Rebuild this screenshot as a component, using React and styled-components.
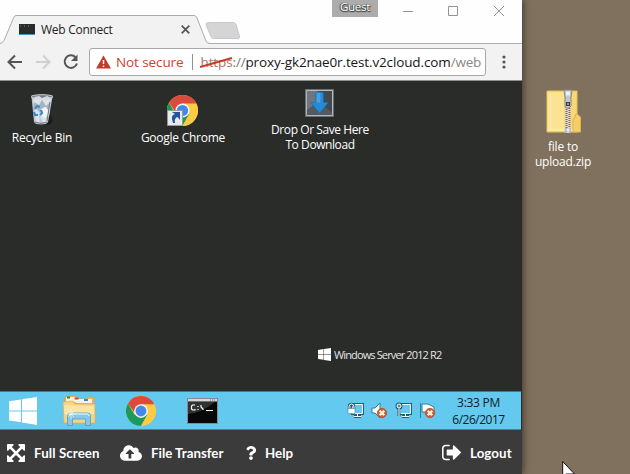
import React from "react";
import styled, { createGlobalStyle } from "styled-components";
import { FaQuestion, FaCloudUploadAlt } from "react-icons/fa";

const Global = createGlobalStyle`
  * { box-sizing: border-box; }
  body { margin: 0; overflow: hidden; }
`;
const ui = `"Open Sans", "Noto Sans", sans-serif`;

const Screen = styled.div`
  display: grid; grid-template-columns: 522px 108px; width: 630px; height: 474px;
  overflow: hidden; font-family: ${ui}; background: #7f715e;
`;
const Browser = styled.main`
  display: grid; grid-template-rows: 44px 37px 310px 39px 44px; min-width: 0;
  background: #2a2c2a; box-shadow: 1px 0 7px rgba(30, 22, 15, 0.65); z-index: 1;
`;
const Text = styled.span`
  display: block; white-space: pre; flex: none; text-align: center;
  font-size: ${p => p.$size || 12}px; line-height: ${p => p.$line || 15}px;
  letter-spacing: ${p => p.$track || 0}px; color: ${p => p.$color || "#fff"};
`;

const TabStrip = styled.header`
  display: flex; align-items: flex-start; background: #fefefe;
  border-bottom: 1px solid #adb0b3; height: 44px;
`;
const Tab = styled.div`
  display: flex; align-items: center; position: relative; width: 205px; height: 29px;
  margin-top: 15px; padding-left: 19px; flex: none;
`;
const TabShape = styled.svg`position: absolute; left: 0; top: 0; overflow: visible;`;
const TabContent = styled.div`
  display: flex; align-items: center; position: relative; width: 172px;
`;
const TabTitle = styled(Text)`margin-left: 6px; width: 140px; text-align: left;`;
const NewTab = styled.svg`margin-top: 22px; flex: none;`;
const Guest = styled.div`
  width: 46px; height: 17px; margin-left: 86px; background: #acacac; display: flex;
  justify-content: center; text-shadow: 0 0 1px #444, 1px 1px 1px #555, -1px 0 1px #555, 0 1px 1px #444;
`;
const Controls = styled.svg`margin: 5px 0 0 25px; flex: none;`;

const Toolbar = styled.nav`
  display: flex; align-items: center; background: #f2f2f2; padding: 0 0 0 7px;
  border-bottom: 1px solid #8f8f8f;
`;
const NavIcons = styled.svg`flex: none;`;
const Address = styled.div`
  display: flex; align-items: center; width: 397px; height: 28px; margin-left: 11px;
  border: 1px solid #a8a8a8; border-radius: 3px; background: #fff; padding-left: 6px; overflow: hidden;
  svg { flex: none; }
`;
const Security = styled.div`display: flex; align-items: center; gap: 5px;`;
const Rule = styled.i`width: 1px; height: 16px; background: #909090; margin: 0 7px 0 9px; flex: none;`;
const Scheme = styled.div`position: relative; flex: none; width: 45px; display: flex;`;
const Strike = styled.svg`position: absolute; left: 0; top: 2px;`;
const Menu = styled.svg`margin-left: 15px; flex: none;`;

const Remote = styled.section`
  display: flex; flex-direction: column; justify-content: space-between; background: #2a2c2a;
`;
const Icons = styled.div`display: grid; grid-template-columns: 84px 198px 76px; padding-top: 7px;`;
const Shortcut = styled.div`display: flex; flex-direction: column; align-items: center;`;
const Picture = styled.div`
  height: ${p => p.$h}px; display: flex; align-items: flex-end;
  padding: 0 ${p => p.$left || 0}px ${p => p.$gap}px ${p => p.$right || 0}px;
  svg { display: block; }
`;
const Brand = styled.div`display: flex; align-items: center; margin: 0 0 29px 318px; gap: 3px; height: 16px;`;

const Taskbar = styled.div`
  display: flex; align-items: center; justify-content: space-between; background: #63c9ee;
  border-top: 1px solid #4f7584; border-bottom: 1px solid #4d8094; margin-right: 1px;
`;
const Launchers = styled.div`display: flex; align-items: center; padding-left: 9px;`;
const Launcher = styled.div`width: ${p => p.$w}px; svg { display: block; }`;
const Tray = styled.div`display: flex; align-items: center; padding-right: 16px;`;
const TrayIcons = styled.svg`margin-right: 16px;`;
const Clock = styled.div`display: flex; flex-direction: column; align-items: center; width: 53px;`;

const Footer = styled.footer`
  display: flex; align-items: center; background: #3b3b3b; padding: 1px 9px 0 7px;
`;
const Action = styled.div`
  display: flex; align-items: center; color: #fff; gap: ${p => p.$gap}px; width: ${p => p.$w}px;
  margin-left: ${p => (p.$end ? "auto" : 0)}; white-space: nowrap;
  font: 700 13.3px/18px Lato, sans-serif; letter-spacing: ${p => p.$track || 0}px;
  svg { flex: none; }
`;
const Desktop = styled.aside`
  display: flex; flex-direction: column; align-items: center; padding: 89px 26px 0 0;
  background: #7f715e; overflow: hidden; height: 474px;
`;
const Cursor = styled.svg`margin: auto 0 0 40px; flex: none; align-self: flex-start;`;

const ChromeLogo = ({ size }) => (
  <svg width={size} height={size} viewBox="0 0 48 48">
    <circle cx="24" cy="24" r="24" fill="#fbcb43" />
    <path d="M3.2 12A24 24 0 0 0 24 48L34.4 30 24 24 13.6 30Z" fill="#1d9a5b" />
    <path d="M24 13H45.3A24 24 0 0 1 24 48L34 30Z" fill="#fbcb43" />
    <path d="M3.2 12A24 24 0 0 1 45.3 13H24L13 26Z" fill="#db4a3d" />
    <circle cx="24" cy="24" r="11" fill="#f5f6f5" />
    <circle cx="24" cy="24" r="8.7" fill="#4389ec" />
  </svg>
);
const WinLogo = ({ size, fill = "#fff" }) => (
  <svg width={size} height={size} viewBox="0 0 28 28">
    <path d="M0 4.2L12 2.4V13.4H0ZM13 2.2L28 0V13.4H13ZM0 14.4H12V25.3L0 23.6ZM13 14.4H28V28L13 25.6Z" fill={fill} />
  </svg>
);
const RecycleBin = () => (
  <svg width="26" height="32" viewBox="0 0 26 32">
    <path d="M19 10L24 28L20 31H9Z" fill="#1b1d1b" />
    <path d="M2.500 3L5 28Q6 30.500 12 30.500T19 28L23.500 3Z" fill="#bcc5cf" />
    <path d="M4 5L7 28L11 30L10 20L14 29L18 28L16 20L20 23L22 5Z" fill="#dce2e8" />
    <path d="M5 8l5 3 3-5 4 6 4-4-1 8-5-3-4 6-4-5-3 3Z" fill="#a7b3c2" />
    <path d="M12 15l5-2 2 4-2 7-4-2Z" fill="#f2f4f5" />
    <ellipse cx="13" cy="2.700" rx="11" ry="2" fill="#737b82" stroke="#cdd3d8" />
    <path d="M5 3l5-1 3 2 5-2 4 2-3 2H7Z" fill="#d9dcdf" />
    <path d="M6 15l2-3 3 1M12 16l1 3-2 2M9 21H6l-1-3" stroke="#2d8fd5" strokeWidth="2.200" fill="none" />
    <path d="M21 8l-3 19M6 28q6 3 12 0" stroke="#6e7984" fill="none" />
  </svg>
);
const DropIcon = () => (
  <svg width="29" height="28" viewBox="0 0 30 29">
    <path d="M0 0H30V29H0Z" fill="#686c70" />
    <path d="M1.5 1.5H28.5V27.5H1.5Z" fill="#43484f" stroke="#bcc2c5" />
    <path d="M2 2H13V15L2 22Z" fill="#6e767e" />
    <path d="M2 22L8 17L12 21L20 18L28 24V27H2Z" fill="#545a62" />
    <path d="M11 4Q15 2 19 4V14H24L15 25L6 14H11Z" fill="#258bd8" stroke="#1b6db0" strokeWidth=".7" />
    <path d="M12 4h4v10h-4Z" fill="#45a1e2" />
  </svg>
);
const ZipFolder = () => (
  <svg width="36" height="45" viewBox="0 0 36 45">
    <path d="M1 2H31V43H1Z" fill="#f8d775" stroke="#eac35b" />
    <path d="M1.5 3H18V42H1.5Z" fill="#fce394" />
    <path d="M4.500 5V40M1.500 41H30" stroke="#fff0b6" />
    <path d="M27 43V31L29 28V26L31 25 34.5 28V43Z" fill="#f6ce68" stroke="#deb24d" />
    <path d="M19 15H25V44H19Z" fill="#ddd8c9" />
    <path d="M20.500 16V44" stroke="#706a62" strokeWidth="2" strokeDasharray="1 1" />
    <path d="M23.500 17V44" stroke="#9b6054" strokeWidth="2" strokeDasharray="1 1" />
    <path d="M18 1H26L25 8V17L23 19H20L19 17V8Z" fill="#c3c6c9" stroke="#858789" />
    <path d="M20 2.500h4v4h-4Z" fill="#eceeef" />
    <path d="M20 13h4v4h-4Z" fill="#3c3f42" /><path d="M21 15h2" stroke="#ddd" />
    <path d="M19 39h6v5h-6Z" fill="#b4b9c5" /><path d="M20 41h4M22 39v5" stroke="#f4f4f4" />
  </svg>
);
const Explorer = () => (
  <svg width="34" height="32" viewBox="0 0 34 32">
    <path d="M3 3L5 1H13L15 4H24L26 2H32V25H3Z" fill="#e6b75c" stroke="#d3a04c" strokeWidth=".7" />
    <path d="M4 2h10v5H4ZM14 4h16v4H14Z" fill="#f5f3e5" />
    <path d="M5 2.500h3" stroke="#168a55" strokeWidth="2" /><path d="M12.500 3.500h4" stroke="#cf4938" strokeWidth="2" />
    <path d="M22 5h4" stroke="#4084bf" strokeWidth="2" />
    <path d="M1 7L11 6 13 9H33V28H2Z" fill="#f6d481" stroke="#dfb05a" strokeWidth=".7" />
    <path d="M2 10L32 11V19H2Z" fill="#fae4a4" />
    <path d="M5.500 30.500V21Q5.500 18 8 18H26Q28.500 18 28.500 21V30.500H23.500V24H10.500V30.500Z" fill="#86c8e9" stroke="#4b9dcb" strokeWidth=".8" />
    <path d="M7 20Q7 19 9 19H25Q27 19 27 21" fill="none" stroke="#cdebf7" strokeWidth="1.5" />
    <path d="M9 14v10M4 19h10M6 16l6 6M12 16l-6 6" stroke="#fff" strokeWidth=".6" />
  </svg>
);
const Terminal = () => (
  <svg width="31" height="26" viewBox="0 0 31 26">
    <path d="M.5.5H30.500V25.500H.5Z" fill="#080808" stroke="#858b91" />
    <path d="M1 4V16Q14 15 28 4Z" fill="#30332f" />
    <path d="M1 1H30V3.500H1Z" fill="#d4d8de" /><path d="M23 2h6" stroke="#55637b" strokeDasharray="1 1" />
    <path d="M8 7H5.500L4.500 8V11L5.500 12H8V11M11 8v1M11 11v1M14 7v2l2 2v1M19 12.500h7" stroke="#fff" fill="none" strokeWidth="1.200" />
  </svg>
);
const ErrorBadge = ({ x, y }) => (
  <g transform={`translate(${x} ${y})`}>
    <circle cx="5" cy="5" r="4.700" fill="#dc582f" stroke="#b94020" strokeWidth=".6" />
    <path d="M2.700 2.700L7.300 7.300M7.300 2.700L2.700 7.300" stroke="#fff7d8" strokeWidth="2.200" />
  </g>
);
const Monitor = () => (
  <>
    <path d="M4.500 1.500H14.500V10.500H4.500Z" fill="none" stroke="#245d73" strokeWidth="3" />
    <path d="M9.500 11v2M6 13.500H13" stroke="#245d73" strokeWidth="3" />
    <path d="M4.500 1.500H14.500V10.500H4.500Z" fill="#63c9ee" stroke="#f5fcff" />
    <path d="M9.500 11v3M6 13.500H13" stroke="#fff" />
  </>
);

export default function App() {
  return (
    <>
      <Global />
      <Screen>
        <Browser>
          <TabStrip>
            <Tab>
              <TabShape width="210" height="30">
                <path d="M0 28.500Q3 28 4 25.500L13.500 3Q14.500 .5 16 .5H194Q196 .5 197 3L206 26Q207 28.500 210 28.500V30H0Z" fill="#f2f2f2" />
                <path d="M0 28.500Q3 28 4 25.500L13.500 3Q14.500 .5 16 .5H194Q196 .5 197 3L206 26Q207 28.500 210 28.500" fill="none" stroke="#a8abae" />
              </TabShape>
              <TabContent>
                <svg width="16" height="12"><path d="M0 0H16V11H0Z" fill="#292c2b" /><path d="M0 10.500H16" stroke="#349dc5" /><path d="M1 2h1M5 2h1M9 2h1" stroke="#6c8994" /></svg>
                <TabTitle $color="#222" $track={-0.27}>Web Connect</TabTitle>
                <svg width="9" height="9"><path d="M.7.7L8.300 8.300M8.300.7L.7 8.300" stroke="#555" strokeWidth="1.700" /></svg>
              </TabContent>
            </Tab>
            <NewTab width="41" height="18">
              <path d="M3.500.5H28Q30 .5 31 2.500L34.500 14Q35 16.500 33 16.500H9Q7 16.500 6 14.500L1 3Q.5.5 3.500.5Z" fill="#d5d5d5" stroke="#c5c9cf" />
            </NewTab>
            <Guest><Text $size={11.5} $line={14} $track={-0.3}>Guest</Text></Guest>
            <Controls width="110" height="14" fill="none" stroke="#949494">
              <path d="M0 6.500H10M46 1.500H54.500V10.500H45.500V1.500ZM91 1L101 11M101 1L91 11" />
            </Controls>
          </TabStrip>
          <Toolbar>
            <NavIcons width="71" height="20" fill="none" strokeWidth="2">
              <path d="M15 10H2M8 3.500L1.500 10L8 16.500" stroke="#555" />
              <path d="M29 10H42M36 3.500L42.500 10L36 16.500" stroke="#cfcfcf" />
              <path d="M68.500 5.200A6.300 6.300 0 1 0 70 11.500" stroke="#555" /><path d="M70.500 2.500V9H64Z" fill="#555" />
            </NavIcons>
            <Address>
              <Security>
                <svg width="15" height="14"><path d="M7.500.5L15 13.500H0Z" fill="#c5392b" /><path d="M7.500 5v4M7.500 10.500v1.500" stroke="#fff" strokeWidth="1.500" /></svg>
                <Text $size={13.5} $line={20} $track={-0.1} $color="#c5452f">Not secure</Text>
              </Security>
              <Rule />
              <Scheme>
                <Text $size={13.5} $line={20} $track={-0.1} $color="#b9705f">https</Text>
                <Text $size={13.5} $line={20} $track={-0.1} $color="#777">://</Text>
                <Strike width="34" height="16"><path d="M0 13L32 4" stroke="#c5392b" strokeWidth="2" /></Strike>
              </Scheme>
              <Text $size={13.5} $line={20} $color="#161616" $track={-0.13}>proxy-gk2nae0r.test.v2cloud.com</Text>
              <Text $size={13.5} $line={20} $color="#888" $track={-0.2}>/web</Text>
            </Address>
            <Menu width="6" height="16" fill="#555"><circle cx="3" cy="3" r="1.600" /><circle cx="3" cy="8" r="1.600" /><circle cx="3" cy="13" r="1.600" /></Menu>
          </Toolbar>
          <Remote>
            <Icons>
              <Shortcut><Picture $h={42} $gap={4}><RecycleBin /></Picture><Text $track={-0.2}>Recycle Bin</Text></Shortcut>
              <Shortcut>
                <Picture $h={42} $gap={3}>
                  <svg width="32" height="32" viewBox="0 0 32 32">
                    <ChromeLogo size={31} />
                    <path d="M.5 15.500H15.500V30.500H.5Z" fill="#e7ebee" stroke="#999" />
                    <path d="M6 28Q3 20 8 19L5 17 13 17 13 25 10.500 22Q7 23 8 28Z" fill="#24559d" />
                  </svg>
                </Picture>
                <Text $track={-0.25}>Google Chrome</Text>
              </Shortcut>
              <Shortcut><Picture $h={34} $gap={5} $left={1}><DropIcon /></Picture><Text $track={-0.42}>{"Drop Or Save Here\nTo Download"}</Text></Shortcut>
            </Icons>
            <Brand><WinLogo size={13} /><Text $size={11} $color="#e4e4e4" $track={-0.87}>Windows Server 2012 R2</Text></Brand>
          </Remote>
          <Taskbar>
            <Launchers>
              <Launcher $w={53}><WinLogo size={28} /></Launcher>
              <Launcher $w={64}><Explorer /></Launcher>
              <Launcher $w={61}><ChromeLogo size={30} /></Launcher>
              <Launcher $w={31}><Terminal /></Launcher>
            </Launchers>
            <Tray>
              <TrayIcons width="89" height="18" viewBox="0 0 89 18">
                <g transform="translate(1 1)"><Monitor /><path d="M1 6V4Q1 1 3.500 1T6 4V6" fill="none" stroke="#245d73" strokeWidth="2.500" /><path d="M1 6V4Q1 1 3.500 1T6 4V6" fill="none" stroke="#fff" /><path d="M0 5.500H7V10.500H0Z" fill="#fff" stroke="#47869d" strokeWidth=".6" /></g>
                <path d="M25 6h3l5-5v15l-5-5h-3Z" fill="#f7ffff" stroke="#397c95" /><ErrorBadge x={30} y={6} />
                <g transform="translate(49 1)"><Monitor /><circle cx="3" cy="3" r="2.500" fill="#63c9ee" stroke="#245d73" strokeWidth="2" /><circle cx="3" cy="3" r="2" fill="#578c9e" stroke="#fff" /><path d="M3 5v8" stroke="#245d73" strokeWidth="3" /><path d="M3 5v8" stroke="#fff" /></g>
                <path d="M73.500 1v15M75 2h6l6 3v7l-5-2h-7Z" fill="#f7ffff" stroke="#397c95" /><ErrorBadge x={78} y={6} />
              </TrayIcons>
              <Clock><Text $color="#101a1e" $line={17} $track={-0.3}>3:33 PM</Text><Text $color="#101a1e" $line={17} $track={-0.5}>6/26/2017</Text></Clock>
            </Tray>
          </Taskbar>
          <Footer>
            <Action $w={113} $gap={9} $track={0.1}>
              <svg width="18" height="18" viewBox="128 128 1536 1536" fill="#fff"><path d="M1411 541l-355 355 355 355 144-144q29-31 70-14 39 17 39 59v448q0 26-19 45t-45 19h-448q-42 0-59-40-17-39 14-69l144-144-355-355-355 355 144 144q31 30 14 69-17 40-59 40h-448q-26 0-45-19t-19-45v-448q0-42 40-59 39-17 69 14l144 144 355-355-355-355-144 144q-19 19-45 19-12 0-24-5-40-17-40-59v-448q0-26 19-45t45-19h448q42 0 59 40 17 39-14 69l-144 144 355 355 355-355-144-144q-31-30-14-69 17-40 59-40h448q26 0 45 19t19 45v448q0 42-39 59-13 5-25 5-26 0-45-19z" /></svg>
              Full Screen
            </Action>
            <Action $w={124} $gap={9}><FaCloudUploadAlt size={22} />File Transfer</Action>
            <Action $w={60} $gap={7}><FaQuestion size={14} />Help</Action>
            <Action $w={71} $gap={9} $end $track={0.1}>
              <svg width="19" height="17" viewBox="64 192 1568 1408" fill="#fff"><path d="M704 1440q0 4 1 20t.5 26.500-3 23.500-10 19.500-20.500 6.500h-320q-119 0-203.500-84.500t-84.500-203.500v-704q0-119 84.500-203.500t203.500-84.500h320q13 0 22.500 9.500t9.500 22.500q0 4 1 20t.5 26.500-3 23.500-10 19.500-20.500 6.500h-320q-66 0-113 47t-47 113v704q0 66 47 113t113 47h312l11.500 1 11.500 3 8 5.500 7 9 2 13.500zm928-544q0 26-19 45l-544 544q-19 19-45 19t-45-19-19-45v-288h-448q-26 0-45-19t-19-45v-384q0-26 19-45t45-19h448v-288q0-26 19-45t45-19 45 19l544 544q19 19 19 45z" /></svg>
              Logout
            </Action>
          </Footer>
        </Browser>
        <Desktop>
          <Picture $h={50} $gap={5} $right={2}><ZipFolder /></Picture>
          <Text $track={-0.2}>{"file to\nupload.zip"}</Text>
          <Cursor width="14" height="13"><path d="M.7.500V16L4 13H12.500Z" fill="#fff" stroke="#111" /></Cursor>
        </Desktop>
      </Screen>
    </>
  );
}
